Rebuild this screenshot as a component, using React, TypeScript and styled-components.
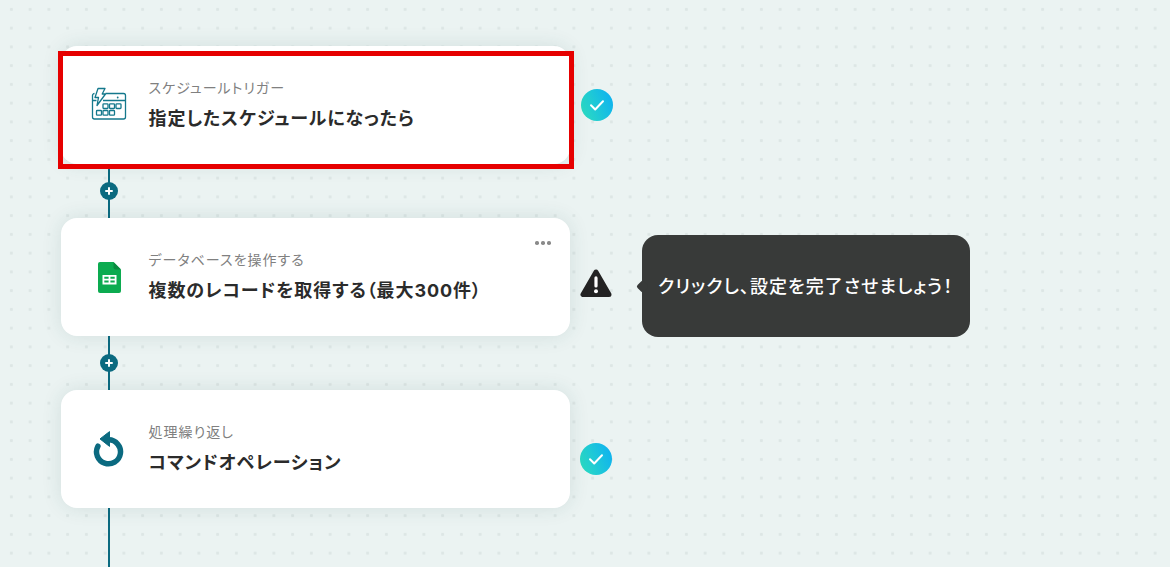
import React from 'react'
import styled, { createGlobalStyle } from 'styled-components'

const GlobalStyle = createGlobalStyle`
    html, body {
        margin: 0;
        padding: 0;
        height: 100%;
        overflow: hidden;
    }
    body {
        font-family: Inter, "Noto Sans CJK JP", "Noto Sans", sans-serif;
        font-feature-settings: "palt";
    }
`

const Canvas = styled.div`
    width: 1170px;
    height: 567px;
    overflow: hidden;
    box-sizing: border-box;
    padding: 46px 0 0 60.5px;
    background-color: #ebf3f2;
    background-image: radial-gradient(circle, #dde6e5 1.3px, transparent 1.8px);
    background-size: 18.75px 18.75px;
    background-position: 2px 0;
`

const Flow = styled.div`
    display: flex;
    flex-direction: column;
`

const Row = styled.div`
    position: relative;
    height: 118px;
    display: flex;
    align-items: flex-start;
`

const Card = styled.div`
    position: relative;
    flex: none;
    box-sizing: border-box;
    width: 509px;
    height: 118px;
    display: flex;
    align-items: center;
    padding-left: 28.5px;
    gap: 19.5px;
    background: #fff;
    border-radius: 16px;
    box-shadow: 0 0 20px rgba(30, 80, 85, 0.12);
`

const IconSlot = styled.div`
    flex: none;
    width: 40px;
    height: 40px;
    display: flex;
    align-items: center;
    justify-content: center;
`

const CardText = styled.div`
    display: flex;
    flex-direction: column;
    gap: 8px;
`

const Label = styled.div`
    font-size: 14px;
    line-height: 20px;
    letter-spacing: 1px;
    color: #808080;
`

const Title = styled.div`
    font-size: 18px;
    line-height: 26px;
    font-weight: 700;
    letter-spacing: 0.9px;
    color: #2b2b2b;
`

const MoreButton = styled.div`
    position: absolute;
    top: 23px;
    right: 19px;
    display: flex;
    gap: 2.5px;
`

const MoreDot = styled.span`
    width: 3.5px;
    height: 3.5px;
    border-radius: 50%;
    background: #8a8a8a;
`

const Status = styled.div<{ $top: number; $left: number }>`
    flex: none;
    display: flex;
    margin: ${({ $top }) => $top}px 0 0 ${({ $left }) => $left}px;
`

const Tooltip = styled.div`
    position: relative;
    flex: none;
    box-sizing: border-box;
    width: 328px;
    height: 102px;
    margin: 17px 0 0 30px;
    display: flex;
    align-items: center;
    padding: 0 0 2px 16px;
    background: #383a39;
    border-radius: 16px;
    color: #fff;
    font-size: 18px;
    font-weight: 500;
    letter-spacing: 1.08px;

    &::before {
        content: '';
        position: absolute;
        left: -4.5px;
        top: 46.5px;
        width: 9px;
        height: 9px;
        background: #383a39;
        border-radius: 2px;
        transform: rotate(45deg);
    }
`

const Connector = styled.div`
    width: 2px;
    height: 54px;
    margin-left: 47.5px;
    background: #0b6a80;
    display: flex;
    align-items: center;
    justify-content: center;
`

const Tail = styled(Connector)`
    height: 60px;
`

const PlusButton = styled.div`
    flex: none;
    width: 18px;
    height: 18px;
    border-radius: 50%;
    background: #0b6a80;
    display: flex;
    align-items: center;
    justify-content: center;
`

const Highlight = styled.div`
    position: absolute;
    left: -2.5px;
    top: 5px;
    box-sizing: border-box;
    width: 516px;
    height: 118px;
    border: 5px solid #e60000;
`

const CalendarIcon = () => (
    <svg width="36" height="36" viewBox="0 0 36 36" fill="none" stroke="#14788c" strokeWidth="1.3">
        <path d="M3.5 6.500a2 2 0 0 0-2 2V30a2 2 0 0 0 2 2h29a2 2 0 0 0 2-2V8.500a2 2 0 0 0-2-2H14.500" />
        <path d="M1.500 13.500h4M12 13.500h22.500" />
        <path d="M7 1.500h7l-2.800 5.500h3.300L6 18.500l1.500-8H4z" fill="#fff" strokeLinejoin="round" />
        <circle cx="26.700" cy="10.500" r="0.900" fill="#14788c" stroke="none" />
        <rect x="12" y="16.800" width="5" height="4.700" rx="0.800" />
        <rect x="18.500" y="16.800" width="5" height="4.700" rx="0.800" />
        <rect x="25" y="16.800" width="5" height="4.700" rx="0.800" />
        <rect x="5.500" y="23.500" width="5" height="4.700" rx="0.800" />
        <rect x="12" y="23.500" width="5" height="4.700" rx="0.800" />
        <rect x="18.500" y="23.500" width="5" height="4.700" rx="0.800" />
    </svg>
)

const SheetsIcon = () => (
    <svg width="23" height="31" viewBox="0 0 23 31">
        <path d="M2 0h13.500L23 7.500V29a2 2 0 0 1-2 2H2a2 2 0 0 1-2-2V2a2 2 0 0 1 2-2z" fill="#0cab50" />
        <path d="M15.500 0L23 7.500h-5.500a2 2 0 0 1-2-2z" fill="#0a8a40" />
        <path d="M4.500 13h14v9.500h-14z M6.300 14.800v2h4.300v-2z M12.400 14.800v2h4.300v-2z M6.300 18.600v2h4.300v-2z M12.400 18.600v2h4.300v-2z" fill="#fff" fillRule="evenodd" />
    </svg>
)

const RepeatIcon = () => (
    <svg width="32" height="38" viewBox="0 0 32 38" fill="none">
        <path d="M4.900 16.200A12 12 0 1 0 15.700 9.800" stroke="#0b6a80" strokeWidth="5.500" strokeLinecap="round" />
        <path d="M16.500 1.600v14.800L7 8.900z" fill="#0b6a80" stroke="#0b6a80" strokeWidth="1" strokeLinejoin="round" />
    </svg>
)

const PlusIcon = () => (
    <svg width="8" height="8" viewBox="0 0 8 8" stroke="#fff" strokeWidth="2" strokeLinecap="round">
        <path d="M4 1v6M1 4h6" />
    </svg>
)

const CheckBadge = () => (
    <svg width="32" height="32" viewBox="0 0 32 32" fill="none">
        <defs>
            <linearGradient id="badge" x1="0" y1="0.800" x2="1" y2="0.400">
                <stop offset="0" stopColor="#2cdcc0" />
                <stop offset="1" stopColor="#10b4ee" />
            </linearGradient>
        </defs>
        <circle cx="16" cy="16" r="16" fill="url(#badge)" />
        <path d="M10 16.200l4.200 4.300L22 12.300" stroke="#fff" strokeWidth="2" strokeLinecap="round" strokeLinejoin="round" />
    </svg>
)

const WarningIcon = () => (
    <svg width="32" height="29" viewBox="0 0 32 29">
        <path d="M16 3L3 25.500h26z" fill="#232323" stroke="#232323" strokeWidth="5" strokeLinejoin="round" />
        <rect x="14.400" y="7.300" width="3.200" height="11.300" rx="1.600" fill="#fff" />
        <circle cx="16" cy="22.300" r="2" fill="#fff" />
    </svg>
)

export default function App() {
    return (
        <Canvas>
            <GlobalStyle />
            <Flow>
                <Row>
                    <Card>
                        <IconSlot>
                            <CalendarIcon />
                        </IconSlot>
                        <CardText>
                            <Label>スケジュールトリガー</Label>
                            <Title>指定したスケジュールになったら</Title>
                        </CardText>
                    </Card>
                    <Status $top={43} $left={11.5}>
                        <CheckBadge />
                    </Status>
                    <Highlight />
                </Row>
                <Connector>
                    <PlusButton>
                        <PlusIcon />
                    </PlusButton>
                </Connector>
                <Row>
                    <Card>
                        <IconSlot>
                            <SheetsIcon />
                        </IconSlot>
                        <CardText>
                            <Label>データベースを操作する</Label>
                            <Title>複数のレコードを取得する（最大300件）</Title>
                        </CardText>
                        <MoreButton>
                            <MoreDot />
                            <MoreDot />
                            <MoreDot />
                        </MoreButton>
                    </Card>
                    <Status $top={51} $left={10.5}>
                        <WarningIcon />
                    </Status>
                    <Tooltip>クリックし、設定を完了させましょう！</Tooltip>
                </Row>
                <Connector>
                    <PlusButton>
                        <PlusIcon />
                    </PlusButton>
                </Connector>
                <Row>
                    <Card>
                        <IconSlot>
                            <RepeatIcon />
                        </IconSlot>
                        <CardText>
                            <Label>処理繰り返し</Label>
                            <Title>コマンドオペレーション</Title>
                        </CardText>
                    </Card>
                    <Status $top={53} $left={10.5}>
                        <CheckBadge />
                    </Status>
                </Row>
                <Tail />
            </Flow>
        </Canvas>
    )
}
